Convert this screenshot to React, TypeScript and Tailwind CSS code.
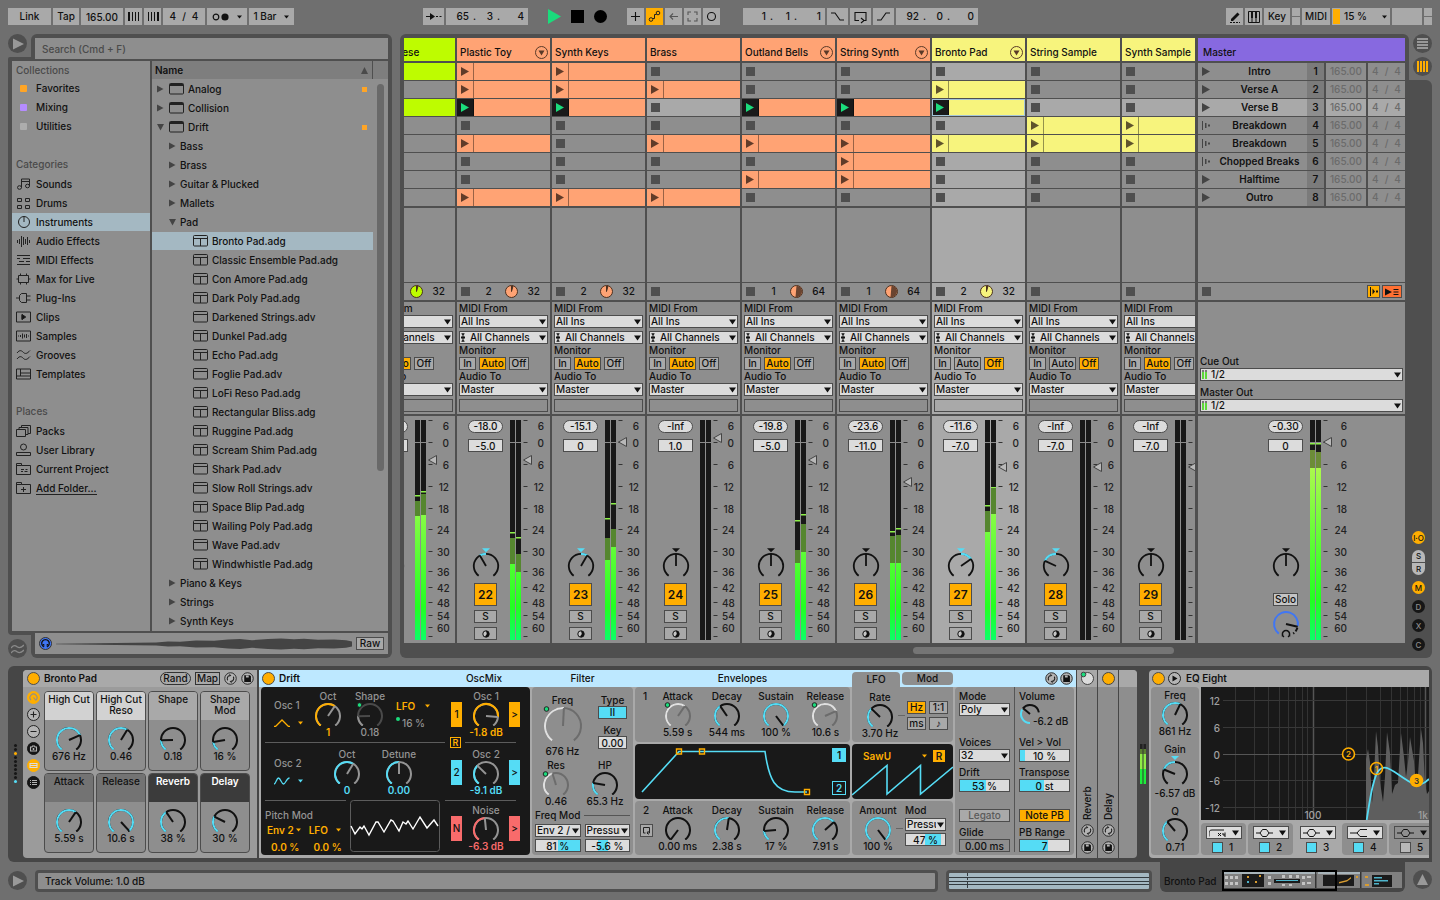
import { clsx } from "clsx";
import { type ReactNode } from "react";

const CYAN = "#55dcf5";
const AMBER = "#ffae00";
const ROSE = "#f86b6b";
const GREEN = "#1bdc7c";

/* ---------- small shared pieces ---------- */

function polar(cx: number, cy: number, r: number, deg: number) {
  const a = (deg * Math.PI) / 180;
  return `${(cx + r * Math.sin(a)).toFixed(2)} ${(cy - r * Math.cos(a)).toFixed(2)}`;
}

function arc(cx: number, cy: number, r: number, from: number, to: number) {
  return `M${polar(cx, cy, r, from)}A${r} ${r} 0 ${to - from > 180 ? 1 : 0} 1 ${polar(cx, cy, r, to)}`;
}

const SWEEP = 143;

type KnobColors = {
  on?: string;
  off?: string;
  needle?: string;
  // shows the green dot of a macro-mapped parameter
  mapped?: boolean;
};

function Knob({
  label,
  value,
  on = CYAN,
  off = "#111",
  needle = "#111",
  mapped,
  r = 12,
  className = "h-6 w-7",
}: KnobColors & {
  label: string;
  value: number;
  r?: number;
  className?: string;
}) {
  const c = r + 2;
  const angle = -SWEEP + value * SWEEP * 2;
  return (
    <svg
      role="slider"
      aria-label={label}
      aria-valuenow={Math.round(value * 100)}
      viewBox={`0 0 ${c * 2} ${c * 2 - 4}`}
      className={clsx("shrink-0", className)}
      fill="none"
      strokeWidth="2"
    >
      <path d={arc(c, c, r, -SWEEP, SWEEP)} stroke={off} />
      {value > 0 && <path d={arc(c, c, r, -SWEEP, angle)} stroke={on} />}
      <path d={`M${c} ${c}L${polar(c, c, r, angle)}`} stroke={needle} />
      {mapped && <circle cx="3.5" cy="3" r="2.3" fill={GREEN} stroke="#222" strokeWidth="1" />}
    </svg>
  );
}

function ParamKnob({
  label,
  value,
  text,
  textClass = "",
  labelClass = "",
  ...knob
}: KnobColors & {
  label: string;
  value: number;
  text: string;
  textClass?: string;
  labelClass?: string;
}) {
  return (
    <div className="flex w-7 shrink-0 flex-col items-center leading-3 whitespace-nowrap">
      <span className={labelClass}>{label}</span>
      <Knob label={label} value={value} {...knob} />
      <span className={textClass}>{text}</span>
    </div>
  );
}

function PanKnob({ angle }: { angle: number }) {
  return (
    <svg
      role="slider"
      aria-label="Pan"
      aria-valuenow={angle}
      viewBox="0 0 28 32"
      className="h-8 w-7 shrink-0"
      fill="none"
      strokeWidth="1.8"
    >
      <path d="M10 1.2h8l-4 4z" fill={angle ? CYAN : "#111"} />
      <path d={arc(14, 19, 12.2, -SWEEP, SWEEP)} stroke="#111" />
      {angle !== 0 && (
        <path
          d={arc(14, 19, 12.2, Math.min(0, angle), Math.max(0, angle))}
          stroke={CYAN}
          strokeWidth="2.2"
        />
      )}
      <path d={`M14 19L${polar(14, 19, 12.2, angle)}`} stroke="#111" />
    </svg>
  );
}

function Caret({ className = "" }: { className?: string }) {
  return (
    <svg viewBox="0 0 7 6" className={clsx("h-1.5 w-[7px] shrink-0", className)} fill="currentColor">
      <path d="M0 .5h7L3.5 5.5z" />
    </svg>
  );
}

function SmallCaret() {
  return (
    <svg viewBox="0 0 5 4" className="h-1 w-[5px] shrink-0" fill="currentColor">
      <path d="M0 .5h5L2.5 3.5z" />
    </svg>
  );
}

function Select({ label, value, icon }: { label: string; value: string; icon?: ReactNode }) {
  return (
    <div className="grid h-[13px] grid-cols-1 items-center">
      <select
        aria-label={label}
        className={clsx(
          "col-start-1 row-start-1 h-[13px] w-full appearance-none overflow-hidden border border-[#4c4c4c] bg-[#dcdcdc] text-[10px] leading-[11px] font-medium",
          icon ? "pl-2.5" : "pl-px",
        )}
      >
        <option>{value}</option>
      </select>
      {icon && (
        <span className="pointer-events-none col-start-1 row-start-1 ml-0.5">{icon}</span>
      )}
      <span className="pointer-events-none col-start-1 row-start-1 mr-px flex h-[11px] w-[9px] items-center justify-center justify-self-end bg-[#dcdcdc]">
        <Caret />
      </span>
    </div>
  );
}

// Number box with a value bar drawn behind the digits, from/to in percent
function ValueBox({
  label,
  value,
  from = 0,
  to = 0,
  className = "bg-[#dcdcdc]",
}: {
  label: string;
  value: string;
  from?: number;
  to?: number;
  className?: string;
}) {
  return (
    <input
      aria-label={label}
      defaultValue={value}
      className={clsx(
        "h-[13px] w-full min-w-0 border border-[#4c4c4c] text-center text-[10px] leading-[11px]",
        className,
      )}
      style={
        to > from
          ? {
              background: `linear-gradient(90deg,#dcdcdc ${from}%,${CYAN} ${from}% ${to}%,#dcdcdc ${to}%)`,
            }
          : undefined
      }
    />
  );
}

function Toggle({
  on,
  children,
  className = "",
}: {
  on?: boolean;
  children: ReactNode;
  className?: string;
}) {
  return (
    <button
      aria-pressed={!!on}
      className={clsx(
        "flex h-[13px] items-center justify-center border border-[#4c4c4c] leading-[11px]",
        on ? "bg-[#ffae00]" : "bg-[#a9a9a9]",
        className,
      )}
    >
      {children}
    </button>
  );
}

function PowerDot({ label }: { label: string }) {
  return (
    <button
      aria-label={label}
      className="size-[13px] shrink-0 rounded-full border border-[#4c4c4c] bg-[#ffae00]"
    />
  );
}

function SwapButton() {
  return (
    <button aria-label="Hot-swap" className="shrink-0">
      <svg viewBox="0 0 14 14" className="size-[13px]" fill="none" stroke="#222">
        <circle cx="7" cy="7" r="6.2" fill="#b4b4b4" />
        <path d="M4 9a3.6 3.6 0 0 1 2-5.3M10 5a3.6 3.6 0 0 1-2 5.3" strokeWidth="1.2" />
        <path d="M5.5 2.2 8 3.5 6 5.2zM8.500 11.800 6 10.500 8 8.800z" fill="#222" stroke="none" />
      </svg>
    </button>
  );
}

function SaveButton() {
  return (
    <button aria-label="Save preset" className="shrink-0">
      <svg viewBox="0 0 14 14" className="size-[13px]">
        <circle cx="7" cy="7" r="6.2" fill="#b4b4b4" stroke="#222" />
        <path d="M3.5 3.5h6l1.200 1.200v6H3.500z" fill="#111" />
        <path d="M5.300 3.800h3v2.200h-3z" fill="#b4b4b4" />
      </svg>
    </button>
  );
}

function PlayCircle({ label }: { label: string }) {
  return (
    <button aria-label={label} className="flex size-[19px] shrink-0 items-center justify-center rounded-full bg-[#4f4f4f]">
      <svg viewBox="0 0 11 12" className="ml-0.5 h-3 w-[11px]" fill="#999">
        <path d="M0 .5 11 6 0 11.500z" />
      </svg>
    </button>
  );
}

/* ---------- transport ---------- */

const box = "flex h-[17px] shrink-0 items-center bg-[#a9a9a9]";
const key = clsx(box, "justify-center");

function Line({ d, label, className = "w-[21px]" }: { d: string; label: string; className?: string }) {
  return (
    <button aria-label={label} className={clsx(key, className)}>
      <svg viewBox="0 0 17 17" className="size-[17px]" fill="none" stroke="currentColor" strokeWidth="1.1">
        <path d={d} />
      </svg>
    </button>
  );
}

function Position({ parts }: { parts: string[] }) {
  return (
    <div className={clsx(box, "w-[82px] justify-end pr-1")}>
      {parts.map((p, i) => (
        <span key={i} className="flex w-6 justify-end gap-1">
          <span>{p}</span>
          {i < 2 && <span>.</span>}
        </span>
      ))}
    </div>
  );
}

function Stepper() {
  return (
    <div className="flex w-2 shrink-0 flex-col gap-px">
      <span className="h-2 bg-[#a9a9a9]" />
      <span className="h-2 bg-[#a9a9a9]" />
    </div>
  );
}

function Transport() {
  return (
    <header className="flex h-[34px] shrink-0 items-start gap-0.5 px-2 pt-2">
      <button className={clsx(key, "w-[43px]")}>Link</button>
      <button className={clsx(key, "w-[26px]")}>Tap</button>
      <input aria-label="Tempo" defaultValue="165.00" className="h-[17px] w-[42px] bg-[#a9a9a9] text-center" />
      <button aria-label="Nudge down" className={clsx(key, "w-[17px]")}>
        <svg viewBox="0 0 12 9" className="h-[9px] w-3" stroke="#111">
          <path d="M1 0v9" strokeWidth="2" />
          <path d="M4.5 0v9M7.5 0v9M10.5 0v9" />
        </svg>
      </button>
      <button aria-label="Nudge up" className={clsx(key, "w-[17px]")}>
        <svg viewBox="0 0 12 9" className="h-[9px] w-3" stroke="#111">
          <path d="M1.5 0v9M4.5 0v9M7.5 0v9" />
          <path d="M11 0v9" strokeWidth="2" />
        </svg>
      </button>
      <button className={clsx(key, "w-[42px] gap-1.5")}>
        <span>4</span>
        <span>/</span>
        <span>4</span>
      </button>
      <button aria-label="Metronome" className={clsx(key, "w-10 gap-2")}>
        <svg viewBox="0 0 17 8" className="h-2 w-[17px]">
          <circle cx="4" cy="4" r="2.8" fill="none" stroke="#111" strokeWidth="1.2" />
          <circle cx="13" cy="4" r="3.6" fill="#111" />
        </svg>
        <SmallCaret />
      </button>
      <button className={clsx(key, "w-[45px] gap-2")}>
        1 Bar <SmallCaret />
      </button>

      <div className="w-[125px] shrink" />

      <button aria-label="Follow" className={clsx(key, "w-[21px]")}>
        <svg viewBox="0 0 17 9" className="h-[9px] w-[17px]" stroke="#111">
          <path d="M1 4.5h5" />
          <path d="M5 1v7l5-3.5z" fill="#111" stroke="none" />
          <path d="M11 4.5h2M14.5 4.5h2" />
        </svg>
      </button>
      <Position parts={["65", "3", "4"]} />
      <div className="flex h-[17px] items-center gap-2.5 px-[18px]">
        <button aria-label="Play">
          <svg viewBox="0 0 13 15" className="h-[15px] w-[13px]" fill={GREEN}>
            <path d="M0 0 13 7.5 0 15z" />
          </svg>
        </button>
        <button aria-label="Stop" className="size-[13px] bg-black" />
        <button aria-label="Record" className="size-[13px] rounded-full bg-black" />
      </div>
      <Line label="Overdub" className="w-[17px]" d="M8.5 4v9M4 8.5h9" />
      <button
        aria-label="Automation arm"
        className="flex h-[17px] w-[17px] shrink-0 items-center justify-center bg-[#ffae00]"
      >
        <svg viewBox="0 0 17 17" className="size-[17px]" fill="none" stroke="#222">
          <circle cx="5" cy="11.5" r="1.8" />
          <circle cx="12" cy="5" r="1.8" />
          <path d="M6.5 10.5h2V6.5h2" />
        </svg>
      </button>
      <Line label="Re-enable automation" className="w-[17px] text-[#555]" d="M13 8.5H5M8 5.5l-3 3 3 3" />
      <Line
        label="Capture MIDI"
        className="w-[17px] text-[#555]"
        d="M4 7V4h3M10 4h3v3M13 10v3h-3M7 13H4v-3"
      />
      <Line label="Session record" className="w-[17px]" d="M12.5 8.5a4 4 0 1 1-8 0 4 4 0 0 1 8 0z" />
      <div className="w-[19px] shrink-0" />
      <Position parts={["1", "1", "1"]} />
      <Line label="Punch in" d="M2 5h4l5 7h4" />
      <Line label="Loop" d="M7 12.5H3v-8h11v8h-3M9 10l3 2.500L9 15" />
      <Line label="Punch out" d="M2 12h4l5-7h4" />
      <Position parts={["92", "0", "0"]} />

      <div className="grow" />

      <button aria-label="Draw mode" className={clsx(key, "w-[17px]")}>
        <svg viewBox="0 0 12 12" className="size-3">
          <path d="M2 8 8.5 1.5l2 2L4 10H2z" fill="#111" />
          <path d="M1 11.5h10" stroke="#111" strokeDasharray="2 1" />
        </svg>
      </button>
      <button aria-label="MIDI keyboard" className={clsx(key, "w-[17px]")}>
        <svg viewBox="0 0 12 12" className="size-3" stroke="#111" fill="none">
          <path d="M.5 .5h11v11H.5zM4 6v5.5M8 6v5.5" />
          <path d="M4 1v6M8 1v6" strokeWidth="2" />
        </svg>
      </button>
      <button className={clsx(key, "w-[26px]")}>Key</button>
      <Stepper />
      <button className={clsx(key, "w-7")}>MIDI</button>
      <button className={clsx(box, "w-[58px] pr-[3px] pl-px")}>
        <span className="mr-1 h-[15px] w-[7px] bg-[#ffae00]" />
        <span className="grow text-left">15 %</span>
        <SmallCaret />
      </button>
      <div className={clsx(box, "w-[30px]")} />
      <Stepper />
    </header>
  );
}

/* ---------- browser ---------- */

const ic = {
  Sounds: "M5.5 10.5V2h8v7M5.5 4.5h8M5.5 10.5a2 1.8 0 1 1-4 0 2 1.8 0 0 1 4 0M13.5 9a2 1.8 0 1 1-4 0 2 1.8 0 0 1 4 0",
  Drums: "M1.5 2.5h4v3h-4zM9.5 2.5h4v3h-4zM1.5 9.5h4v3h-4zM9.5 9.5h4v3h-4z",
  Instruments: "M13.5 7a5.5 5.5 0 1 1-11 0 5.5 5.5 0 0 1 11 0M8 1.5V7",
  "Audio Effects": "M1.5 6v3M3.5 5v5M5.5 2v11M7.5 3v8M9.5 5v5M11.5 3v8M13.5 6v3",
  "MIDI Effects": "M1 2.5h13M1 5.5h3M7 5.5h7M3 8.5h5M10 8.5h4M1 11.5h13",
  "Max for Live": "M2.5 3.5h10v7h-10zM4.5 1.5v2M10.5 1.5v2M4.5 10.5v2M10.5 10.5v2M.5 7h2M12.5 7h2",
  "Plug-Ins": "M0 7h3M10.5 2.5H5.5L3.5 4.5v5l2 2h5zM10.5 5h4M10.5 9h4",
  Clips: "M.5 2h14v10H.5zM6 4.5v5L9.5 7z",
  Samples: "M.5 2h14v10H.5zM2.5 6.5v1M4.5 6v2M6.5 4.5v5M8.5 5.5v3M10.5 5v4M12.5 6.5v1",
  Grooves: "M1 5c3-4 5-2 6.5-.5S11 6 14 2.5M1 11c3-4 5-2 6.5-.5S11 12 14 8.5",
  Templates: "M.5 2h14v10H.5zM4.5 2v7M.5 9h14M4.5 6h10",
  Packs: "M.5 5.5h9v7h-9zM3 5.5v-2h9v7H9.5M5.5 3.5v-2h9v8h-2.5",
  "User Library": "M10.5 4a3 3 0 1 1-6 0 3 3 0 0 1 6 0M.5 9.5h14v3H.5z",
  "Current Project": "M.5 12.5v-11h5v2h9v9zM.5 3.5h5M5 7.5h3M9.5 7.5h2M5 9.5h2M8.5 9.5h3",
  "Add Folder...": "M.5 12.5v-11h5v2h9v9zM.5 3.5h5M7.5 6v5M5 8.5h5",
};

const categories: (keyof typeof ic)[] = [
  "Sounds",
  "Drums",
  "Instruments",
  "Audio Effects",
  "MIDI Effects",
  "Max for Live",
  "Plug-Ins",
  "Clips",
  "Samples",
  "Grooves",
  "Templates",
];
const places: (keyof typeof ic)[] = ["Packs", "User Library", "Current Project", "Add Folder..."];

const collections = [
  { name: "Favorites", color: "bg-[#ffa526]" },
  { name: "Mixing", color: "bg-[#b58cff]" },
  { name: "Utilities", color: "bg-[#adadad]" },
];

type Node = { name: string; level: number; open?: boolean; tag?: boolean };
const nodes: Node[] = [
  { name: "Analog", level: 0, tag: true },
  { name: "Collision", level: 0 },
  { name: "Drift", level: 0, open: true, tag: true },
  { name: "Bass", level: 1 },
  { name: "Brass", level: 1 },
  { name: "Guitar & Plucked", level: 1 },
  { name: "Mallets", level: 1 },
  { name: "Pad", level: 1, open: true },
  { name: "Bronto Pad.adg", level: 2 },
  { name: "Classic Ensemble Pad.adg", level: 2 },
  { name: "Con Amore Pad.adg", level: 2 },
  { name: "Dark Poly Pad.adg", level: 2 },
  { name: "Darkened Strings.adv", level: 2 },
  { name: "Dunkel Pad.adg", level: 2 },
  { name: "Echo Pad.adg", level: 2 },
  { name: "Foglie Pad.adv", level: 2 },
  { name: "LoFi Reso Pad.adg", level: 2 },
  { name: "Rectangular Bliss.adg", level: 2 },
  { name: "Ruggine Pad.adg", level: 2 },
  { name: "Scream Shim Pad.adg", level: 2 },
  { name: "Shark Pad.adv", level: 2 },
  { name: "Slow Roll Strings.adv", level: 2 },
  { name: "Space Blip Pad.adg", level: 2 },
  { name: "Wailing Poly Pad.adg", level: 2 },
  { name: "Wave Pad.adv", level: 2 },
  { name: "Windwhistle Pad.adg", level: 2 },
  { name: "Piano & Keys", level: 1 },
  { name: "Strings", level: 1 },
  { name: "Synth Keys", level: 1 },
];

function SideRow({ name, active }: { name: keyof typeof ic; active?: boolean }) {
  return (
    <li>
      <button
        className={clsx("mt-px flex h-[18px] w-full items-center gap-1 pl-1 text-left", active && "bg-[#a4b8c2]")}
      >
        <svg viewBox="0 0 16 14" className="h-3.5 w-4 shrink-0" fill="none" stroke="#222">
          <path d={ic[name]} />
          {name === "Clips" && <path d="M6 4.5v5L9.5 7z" fill="#111" />}
        </svg>
        <span className={clsx("leading-3", name === "Add Folder..." && "border-b border-[#222]")}>{name}</span>
      </button>
    </li>
  );
}

function TreeRow({ node }: { node: Node }) {
  const active = node.name === "Bronto Pad.adg";
  return (
    <li>
      <button
        className={clsx(
          "mt-px flex h-[18px] w-full items-center text-left",
          node.level === 0 && "pl-[5px]",
          node.level === 1 && "pl-[17px]",
          node.level === 2 && "pl-[41px]",
          active && "bg-[#a4b8c2]",
        )}
      >
        {node.level < 2 && (
          <svg viewBox="0 0 7 8" className="mr-1 h-2 w-[7px]" fill="#444">
            <path d={node.open ? "M0 1h7L3.5 7.5z" : "M0 .5 6.5 4 0 7.5z"} />
          </svg>
        )}
        {node.level !== 1 && (
          <svg
            viewBox="0 0 15 12"
            className={clsx("mr-1 h-3 w-[15px]", node.level === 0 && "ml-px")}
            fill="none"
            stroke="#222"
          >
            <rect x=".5" y=".5" width="14" height="10.5" rx="1" />
            {node.level === 0 ? (
              <path d="M1 2h13" strokeWidth="2" />
            ) : (
              <path d={node.name.endsWith("adg") ? "M1 3.5h13M7.5 3.5V11" : "M1 3.5h13"} />
            )}
          </svg>
        )}
        <span className="grow">{node.name}</span>
        {node.tag && <span className="mr-1.5 size-[5px] shrink-0 bg-[#ffa526]" />}
      </button>
    </li>
  );
}

function Browser() {
  return (
    <section className="flex w-96 shrink-0 flex-col">
      <div className="flex">
        <div className="flex w-[23px] flex-col justify-between">
          <PlayCircle label="Preview" />
          <div className="h-0.5 rounded-tl-sm bg-[#4f4f4f]" />
        </div>
        <div className="grow rounded-t-md bg-[#4f4f4f] px-1 pt-1">
          <input
            type="search"
            aria-label="Search"
            placeholder="Search (Cmd + F)"
            className="block h-[21px] w-full bg-[#8e8e8e] px-[7px] placeholder:text-[#4a4a4a]"
          />
        </div>
      </div>
      <div className="flex grow gap-0.5 bg-[#4f4f4f] px-1 pt-0.5">
        <nav className="w-[138px] bg-[#8e8e8e]">
          <h2 className="h-[18px] pl-1 leading-[18px] text-[#4a4a4a]">Collections</h2>
          <ul className="mb-[19px]">
            {collections.map((c) => (
              <li key={c.name}>
                <button className="flex h-[19px] items-center gap-[9px] pl-2">
                  <span className={clsx("size-[7px] rounded-[1px]", c.color)} />
                  {c.name}
                </button>
              </li>
            ))}
          </ul>
          <h2 className="h-[19px] pl-1 leading-[19px] text-[#4a4a4a]">Categories</h2>
          <ul className="mb-[19px]">
            {categories.map((c) => (
              <SideRow key={c} name={c} active={c === "Instruments"} />
            ))}
          </ul>
          <h2 className="h-[19px] pl-1 leading-[19px] text-[#4a4a4a]">Places</h2>
          <ul>
            {places.map((c) => (
              <SideRow key={c} name={c} />
            ))}
          </ul>
        </nav>
        <div className="grow bg-[#8e8e8e]">
          <div className="flex h-[18px] items-center bg-[#7e7e7e] pl-[3px]">
            <span className="grow font-semibold">Name</span>
            <svg viewBox="0 0 7 7" className="mr-1 size-[7px]" fill="#4a4a4a">
              <path d="M3.5 0 7 7H0z" />
            </svg>
            <span className="h-full w-4 border-l border-[#4f4f4f]" />
          </div>
          <div className="flex">
            <ul className="grow">
              {nodes.map((n) => (
                <TreeRow key={n.name} node={n} />
              ))}
            </ul>
            <div className="w-[15px] pt-[5px] pl-1">
              <div className="h-[387px] w-[7px] rounded-full bg-[#696969]" />
            </div>
          </div>
        </div>
      </div>
      <div className="flex">
        <div className="flex w-[23px] flex-col justify-between">
          <div className="h-1 rounded-bl-md bg-[#4f4f4f]" />
          <button aria-label="Groove pool" className="flex size-[19px] items-center justify-center rounded-full bg-[#4f4f4f]">
            <svg viewBox="0 0 13 10" className="h-2.5 w-[13px]" fill="none" stroke="#8a8a8a" strokeWidth="1.3">
              <path d="M0 4c3-4 5-2 6.5-1S10 4 13 1M0 9c3-4 5-2 6.5-1S10 9 13 6" />
            </svg>
          </button>
        </div>
        <div className="grow rounded-b-md bg-[#4f4f4f] px-1 pt-0.5 pb-1">
          <div className="flex h-[21px] items-center gap-1 bg-[#8e8e8e] px-1">
            <button aria-label="Headphone preview" className="shrink-0">
              <svg viewBox="0 0 13 13" className="size-[13px]">
                <circle cx="6.5" cy="6.5" r="6" fill="#3f76f5" stroke="#333" />
                <path d="M4.8 9.8A3.8 3.8 0 1 1 8.2 9.8" fill="none" stroke="#111" strokeWidth="1.3" />
                <path d="M3.5 7h1.800v3zM9.500 7H7.700v3z" fill="#111" />
              </svg>
            </button>
            <svg viewBox="0 0 296 12" preserveAspectRatio="none" className="h-3 min-w-0 grow" fill="#444">
              <path d="M0 5.7 60 5.1 100 4.400 112 3.600 124 3.800 140 2.400 158 2.800 172 1.600 184 1 196 2.200 212 1 225 .5 238 1.200 248 .8 262 1.800 278 1.400 290 2.200 296 3.500V8.500L290 9.800 278 10.600 262 10.200 248 11.200 238 10.800 225 11.500 212 11 196 9.800 184 11 172 10.400 158 9.200 140 9.600 124 8.200 112 8.400 100 7.600 60 6.900 0 6.300z" />
            </svg>
            <Toggle className="w-7">Raw</Toggle>
          </div>
        </div>
      </div>
    </section>
  );
}

/* ---------- session view ---------- */

type Track = {
  name: string;
  color: string;
  pie?: string;
  menu?: boolean;
  clips: number[];
  playing?: boolean;
  status?: [string, string];
  auto?: boolean;
  peak: string;
  volume: string;
  number: string;
  pan: number;
  fader: number;
  // peak line, dim top, bright top per channel, in meter pixels
  meter?: number[][];
};

const ORANGE = "bg-[#ffa374]";
const YELLOW = "bg-[#f7f47d]";

const tracks: Track[] = [
  { name: "Big Cheese", color: "bg-[#befc00]", pie: "#befc00", clips: [1, 3], playing: true, status: ["2", "32"], auto: true, peak: "-9.4", volume: "-5.0", number: "21", pan: 0, fader: 40, meter: [[75, 81, 96], [71, 74, 95]] },
  { name: "Plastic Toy", color: ORANGE, pie: "#ffa374", menu: true, clips: [1, 2, 3, 5, 8], playing: true, status: ["2", "32"], auto: true, peak: "-18.0", volume: "-5.0", number: "22", pan: -30, fader: 40, meter: [[112, 118, 144], [117, 134, 152]] },
  { name: "Synth Keys", color: ORANGE, pie: "#ffa374", clips: [1, 2, 3, 8], playing: true, status: ["2", "32"], auto: true, peak: "-15.1", volume: "0", number: "23", pan: 30, fader: 22, meter: [[98, 118, 140], [83, 109, 127]] },
  { name: "Brass", color: ORANGE, clips: [2, 5, 8], auto: true, peak: "-Inf", volume: "1.0", number: "24", pan: 0, fader: 18 },
  { name: "Outland Bells", color: ORANGE, pie: "#ffa374", menu: true, clips: [3, 5, 7], playing: true, status: ["1", "64"], auto: true, peak: "-19.8", volume: "-5.0", number: "25", pan: 0, fader: 40, meter: [[100, 130, 143], [94, 104, 132]] },
  { name: "String Synth", color: ORANGE, pie: "#ffa374", menu: true, clips: [3, 5, 6, 7], playing: true, status: ["1", "64"], auto: true, peak: "-23.6", volume: "-11.0", number: "26", pan: 0, fader: 62, meter: [[111, 116, 143], [108, 115, 143]] },
  { name: "Bronto Pad", color: YELLOW, pie: "#f7f47d", menu: true, clips: [2, 3, 5], playing: true, status: ["2", "32"], peak: "-11.6", volume: "-7.0", number: "27", pan: 55, fader: 47, meter: [[85, 91, 112], [67, 69, 94]] },
  { name: "String Sample", color: YELLOW, clips: [4, 5], peak: "-Inf", volume: "-7.0", number: "28", pan: -65, fader: 47 },
  { name: "Synth Sample", color: YELLOW, clips: [4, 5], auto: true, peak: "-Inf", volume: "-7.0", number: "29", pan: 0, fader: 47 },
];

const scenes = ["Intro", "Verse A", "Verse B", "Breakdown", "Breakdown", "Chopped Breaks", "Halftime", "Outro"];

function StopSquare() {
  return <button aria-label="Stop" className="ml-1 size-[9px] shrink-0 bg-[#4f4f4f]" />;
}

function ClipSlot({ track, row, selected }: { track: Track; row: number; selected: boolean }) {
  const filled = track.clips.includes(row);
  const playing = filled && row === 3 && track.playing;
  if (!filled) {
    return (
      <div className={clsx("flex h-[17px] items-center", selected || row === 3 ? "bg-[#a9a9a9]" : "bg-[#8e8e8e]")}>
        <StopSquare />
      </div>
    );
  }
  return (
    <div
      className={clsx(
        "flex h-[17px]",
        track.color,
        selected && row === 3 && "outline -outline-offset-1 outline-[#a4c4d8]",
      )}
    >
      <button
        aria-label="Launch clip"
        className={clsx("flex w-[17px] items-center border-r border-black/40 pl-1", playing && "bg-[#1a1a1a]")}
      >
        <svg viewBox="0 0 8 9" className="h-[9px] w-2" fill={playing ? GREEN : "rgba(30,15,10,.7)"}>
          <path d="M0 0 8 4.5 0 9z" />
        </svg>
      </button>
    </div>
  );
}

const scale = [
  ["6", "h-[17px]"],
  ["0", "h-[22px]"],
  ["6", "h-[22px]"],
  ["12", "h-[22px]"],
  ["18", "h-[21px]"],
  ["24", "h-[22px]"],
  ["30", "h-5"],
  ["36", "h-4"],
  ["42", "h-[15px]"],
  ["48", "h-[13px]"],
  ["54", "h-3"],
  ["60", "h-3"],
];
const ticks = [0.5, 22.5, 44.5, 66.5, 88.5, 109.5, 131.5, 151.5, 167.5, 182.5, 195.5, 207.5, 216.5];

function Meter({ id, levels, fader, hot }: { id: string; levels?: number[][]; fader: number; hot?: boolean }) {
  return (
    <svg viewBox="0 0 22 220" className="h-[220px] w-[22px] shrink-0">
      <defs>
        <linearGradient id={id} gradientUnits="userSpaceOnUse" x1="0" y1="220" x2="0" y2={hot ? 40 : 70}>
          <stop offset="0" stopColor="#0cff68" />
          <stop offset=".22" stopColor="#22ff22" />
          <stop offset="1" stopColor={hot ? "#b4f850" : "#a2fa50"} />
        </linearGradient>
      </defs>
      {[0, 1].map((ch) => {
        const x = ch * 6;
        const l = levels?.[ch];
        return (
          <g key={ch}>
            <rect x={x} width="5" height="220" fill="#181818" />
            <rect x={x} y="22" width="5" height="1" fill="#8a8a8a" />
            {l && (
              <>
                <rect x={x} y={l[1]} width="5" height={l[2] - l[1]} fill={hot ? "#6c8c38" : "#55862f"} />
                <rect x={x} y={l[2]} width="5" height={220 - l[2]} fill={`url(#${id})`} />
                <rect x={x} y={l[0]} width="5" height="1.5" fill="#8df04a" />
              </>
            )}
          </g>
        );
      })}
      {ticks.map((y) => (
        <path key={y} d={`M13.5 ${y}h4`} stroke="#333" />
      ))}
      <path d={`M13.5 ${fader}l8-4.5v9z`} fill="#b8b8b8" stroke="#444" />
    </svg>
  );
}

function Scale({ className = "" }: { className?: string }) {
  return (
    <div className={clsx("text-right leading-3 text-[#222]", className)}>
      {scale.map(([t, h], i) => (
        <div key={i} className={h}>
          {t}
        </div>
      ))}
    </div>
  );
}

function Levels({ peak, volume }: { peak: string; volume: string }) {
  return (
    <>
      <button className="mb-1.5 h-[13px] w-full rounded-full border border-[#4c4c4c] bg-[#dcdcdc] leading-[11px]">
        {peak}
      </button>
      <ValueBox label="Volume" value={volume} />
    </>
  );
}

const dots = (
  <svg viewBox="0 0 4 9" className="h-[9px] w-1" fill="#111">
    <path d="M0 .5h4L2 2.500zM0 3.500h4v2H0zM2 6.500l2 2H0zM1.500 0h1v9h-1z" />
  </svg>
);

const bars = (
  <svg viewBox="0 0 5 9" className="h-[9px] w-[5px]">
    <path d="M0 0h2v9H0zM3 0h2v9H3z" fill="#5ed83a" />
    <path d="M0 0h2v2H0zM3 0h2v2H3z" fill="#777" />
  </svg>
);

function TrackColumn({ track, selected = false }: { track: Track; selected?: boolean }) {
  const bg = selected ? "bg-[#a9a9a9]" : "bg-[#8e8e8e]";
  return (
    <div className="flex w-[93px] shrink-0 flex-col">
      <div className={clsx("mb-0.5 flex h-[23px] items-center justify-between pt-1.5 pr-0.5 pl-[3px] whitespace-nowrap", track.color)}>
        <span>{track.name}</span>
        {track.menu && (
          <svg viewBox="0 0 13 13" className="size-[13px]">
            <circle cx="6.5" cy="6.5" r="6" fill="none" stroke="#5a3a28" />
            <path d="M3.5 4.5h6l-3 5z" fill="#5a3a28" />
          </svg>
        )}
      </div>
      <div className="flex flex-col gap-px">
        {scenes.map((_, i) => (
          <ClipSlot key={i} track={track} row={i + 1} selected={selected} />
        ))}
      </div>
      <div className={clsx("mt-0.5 min-h-[74px] grow", bg)} />
      <div className={clsx("mt-px flex h-[17px] items-center", bg)}>
        <StopSquare />
        {track.status && (
          <>
            <span className="w-[35px] pl-0.5 text-center">{track.status[0]}</span>
            <svg viewBox="0 0 13 13" className="size-[13px] shrink-0">
              <circle cx="6.5" cy="6.5" r="6" fill={track.pie} stroke="#4a3020" />
              {track.status[1] === "64" ? (
                <path d="M6.5 .5a6 6 0 0 1-1 12z" fill="#6a4430" />
              ) : (
                <path d="M6.500 6.500V1h1.500z" fill="#4a3020" stroke="#4a3020" />
              )}
            </svg>
            <span className="grow pr-2.5 text-right">{track.status[1]}</span>
          </>
        )}
      </div>
      <div className={clsx("mt-0.5 flex h-28 flex-col px-0.5 leading-[13px]", bg)}>
        <span>MIDI From</span>
        <Select label="MIDI From" value="All Ins" />
        <div className="h-[3px]" />
        <Select label="MIDI channel" value="All Channels" icon={dots} />
        <span>Monitor</span>
        <div className="flex gap-[3px]" role="group" aria-label="Monitor">
          <Toggle className="w-[17px]">In</Toggle>
          <Toggle on={track.auto} className="w-[27px]">
            Auto
          </Toggle>
          <Toggle on={!track.auto} className="w-5">
            Off
          </Toggle>
        </div>
        <span>Audio To</span>
        <Select label="Audio To" value="Master" />
        <div className="mt-[3px] h-[13px] border border-[#4c4c4c]" />
      </div>
      <div className={clsx("mt-0.5 flex h-[227px] pt-1 pl-[11px]", bg)}>
        <div className="mr-[7px] flex w-[35px] flex-col items-center">
          <Levels peak={track.peak} volume={track.volume} />
          <div className="grow" />
          <PanKnob angle={track.pan} />
          <button className="mt-1 h-[23px] w-[23px] border border-[#4c4c4c] bg-[#ffae00] text-xs font-semibold">
            {track.number}
          </button>
          <Toggle className="mt-1 w-[23px]">S</Toggle>
          <button
            aria-label="Arm"
            className="mt-1 mb-[3px] flex h-[13px] w-[23px] items-center justify-center border border-[#4c4c4c] bg-[#a9a9a9]"
          >
            <svg viewBox="0 0 8 8" className="size-2">
              <circle cx="4" cy="4" r="3.2" fill="#c8c8c8" stroke="#111" />
              <path d="M4 .8A3.2 3.2 0 0 1 4 7.200L3 6.500 4.800 4z" fill="#111" />
            </svg>
          </button>
        </div>
        <Meter id={`m${track.number}`} levels={track.meter} fader={track.fader} />
        <Scale className="w-3" />
      </div>
    </div>
  );
}

function MasterColumn() {
  return (
    <div className="flex w-[207px] shrink-0 flex-col">
      <div className="mb-0.5 flex h-[23px] items-center bg-[#8769e0] px-[5px] pt-1.5">Master</div>
      <div className="flex flex-col gap-px">
        {scenes.map((name, i) => {
          const bg = i === 2 ? "bg-[#a9a9a9]" : "bg-[#8e8e8e]";
          const num = i === 2 ? "bg-[#8e8e8e]" : "bg-[#7b7b7b]";
          const follow = i > 2 && i < 6;
          return (
            <div key={i} className="flex h-[17px] gap-0.5">
              <div className={clsx("flex grow items-center", bg)}>
                <button aria-label="Launch scene" className="w-3.5 pl-1">
                  <svg viewBox="0 0 8 9" className="h-[9px] w-2" fill="#444">
                    {follow ? <path d="M0 0h1v9H0zM3 2h1.5v5H3zM6 3.5h2v2H6z" /> : <path d="M0 0 8 4.5 0 9z" />}
                  </svg>
                </button>
                <span className="grow text-center font-semibold whitespace-nowrap">{name}</span>
                <span className={clsx("h-full w-[17px] text-center leading-[17px] font-semibold", num)}>{i + 1}</span>
              </div>
              <span className={clsx("w-10 text-center leading-[17px] text-[#6b6b6b]", bg)}>165.00</span>
              <span className={clsx("flex w-[37px] justify-center gap-1.5 leading-[17px] text-[#6b6b6b]", bg)}>
                <span>4</span>
                <span>/</span>
                <span>4</span>
              </span>
            </div>
          );
        })}
      </div>
      <div className="mt-0.5 min-h-[74px] grow bg-[#8e8e8e]" />
      <div className="mt-px flex h-[17px] items-center bg-[#8e8e8e] pr-[3px]">
        <StopSquare />
        <div className="grow" />
        <Toggle on className="mr-0.5 w-[13px]">
          <svg viewBox="0 0 8 9" className="h-[9px] w-2" fill="#111">
            <path d="M0 0h1v9H0zM2.5 1.5 5 4.500 2.500 7.500zM6 3.500h2v2H6z" />
          </svg>
        </Toggle>
        <button
          aria-label="Back to arrangement"
          className="flex h-[13px] w-5 items-center justify-center border border-[#4c4c4c] bg-[#ff7033]"
        >
          <svg viewBox="0 0 14 8" className="h-2 w-3.5" fill="#111">
            <path d="M0 .5 7 4 0 7.5zM8.5 1h5v1h-5zM8.5 3.5h5v1h-5zM8.5 6h5v1h-5z" />
          </svg>
        </button>
      </div>
      <div className="mt-0.5 flex h-28 flex-col justify-end bg-[#8e8e8e] px-0.5 pb-0.5 leading-[13px]">
        <span>Cue Out</span>
        <Select label="Cue Out" value="1/2" icon={bars} />
        <div className="h-[5px]" />
        <span>Master Out</span>
        <Select label="Master Out" value="1/2" icon={bars} />
      </div>
      <div className="mt-0.5 flex h-[227px] bg-[#8e8e8e] pt-1 pl-[70px]">
        <div className="mr-[7px] flex w-[35px] flex-col items-center">
          <Levels peak="-0.30" volume="0" />
          <div className="grow" />
          <PanKnob angle={0} />
          <button className="mt-3.5 mb-1 h-[13px] w-[25px] shrink-0 border border-[#4c4c4c] bg-[#c4c4c4] leading-[11px]">
            Solo
          </button>
          <svg
            role="slider"
            aria-label="Cue volume"
            aria-valuenow={90}
            viewBox="0 0 28 28"
            className="mb-[5px] size-7 shrink-0"
            fill="none"
            strokeWidth="2"
          >
            <path d={arc(14, 14, 12, -SWEEP, 100)} stroke="#3f76f5" />
            <path d={arc(14, 14, 12, 108, SWEEP)} stroke="#111" strokeDasharray="4 2" />
            <path d={`M14 14L${polar(14, 14, 12, 103)}`} stroke="#111" />
            <path d="M12 27a3.600 3.600 0 1 1 4 0M10.500 24v2.500M17.500 24v2.500" stroke="#111" strokeWidth="1.5" />
          </svg>
        </div>
        <Meter id="mm" levels={[[23, 30, 48], [23, 32, 48]]} fader={22} hot />
        <Scale className="w-[15px]" />
      </div>
    </div>
  );
}

function RailDot({ children, className }: { children: string; className: string }) {
  return (
    <button className={clsx("flex w-[13px] items-center justify-center text-[8px] leading-none", className)}>
      {children}
    </button>
  );
}

function Session() {
  return (
    <section className="flex min-w-0 grow">
      <div className="flex min-w-0 grow flex-col rounded-t-md rounded-bl-md bg-[#4f4f4f] px-1 pt-1">
        <div className="flex grow gap-[3px]">
          <div className="flex w-0 grow gap-0.5 overflow-hidden">
            {tracks.map((t, i) =>
              i === 0 ? (
                <div key={t.name} className="flex w-[51px] shrink-0 justify-end overflow-hidden">
                  <TrackColumn track={t} />
                </div>
              ) : (
                <TrackColumn key={t.name} track={t} selected={t.number === "27"} />
              ),
            )}
          </div>
          <MasterColumn />
        </div>
        <div className="flex h-[15px] items-center justify-end">
          <div className="mr-[231px] h-[7px] w-[261px] rounded-full bg-[#757575]" />
        </div>
      </div>
      <div className="flex w-[23px] shrink-0 flex-col">
        <div className="flex h-[46px] flex-col gap-1 pl-1">
          <button aria-label="Arrangement view" className="flex size-[19px] items-center justify-center rounded-full bg-[#4f4f4f]">
            <svg viewBox="0 0 11 11" className="size-[11px]" fill="#999">
              <path d="M0 0h11v2H0zM0 3h11v2H0zM0 6h11v2H0zM0 9h11v2H0z" />
            </svg>
          </button>
          <button aria-label="Session view" className="flex size-[19px] items-center justify-center rounded-full bg-[#4f4f4f]">
            <svg viewBox="0 0 11 11" className="size-[11px]" fill="#ffae00">
              <path d="M0 0h2v11H0zM3 0h2v11H3zM6 0h2v11H6zM9 0h2v11H9z" />
            </svg>
          </button>
        </div>
        <div className="flex grow flex-col justify-end gap-1.5 rounded-r-md bg-[#4f4f4f] pb-[7px] pl-[3px]">
          <RailDot className="h-[13px] rounded-full bg-[#ffae00]">I·O</RailDot>
          <div className="flex flex-col gap-px">
            <RailDot className="h-3 rounded-t-full bg-[#b8b8b8]">S</RailDot>
            <RailDot className="h-3 rounded-b-full bg-[#b8b8b8]">R</RailDot>
          </div>
          <RailDot className="h-[13px] rounded-full bg-[#ffae00]">M</RailDot>
          <RailDot className="h-[13px] rounded-full bg-[#161616] text-[#8e8e8e]">D</RailDot>
          <RailDot className="h-[13px] rounded-full bg-[#161616] text-[#8e8e8e]">X</RailDot>
          <RailDot className="h-[13px] rounded-full bg-[#161616] text-[#8e8e8e]">C</RailDot>
        </div>
      </div>
    </section>
  );
}

/* ---------- devices ---------- */

const macros = [
  { name: "High Cut", text: "676 Hz", value: 0.73, head: "bg-[#d2d2d2]" },
  { name: "High Cut Reso", text: "0.46", value: 0.61, head: "bg-[#d2d2d2]" },
  { name: "Shape", text: "0.18", value: 0.18, head: "bg-[#a9a9a9]" },
  { name: "Shape Mod", text: "16 %", value: 0.15, head: "bg-[#a9a9a9]" },
  { name: "Attack", text: "5.59 s", value: 0.62, head: "bg-[#737373]" },
  { name: "Release", text: "10.6 s", value: 0.98, head: "bg-[#737373]" },
  { name: "Reverb", text: "38 %", value: 0.38, head: "bg-[#3b3b3b] text-white font-semibold" },
  { name: "Delay", text: "30 %", value: 0.28, head: "bg-[#3b3b3b] text-white font-semibold" },
];

const rackIcons = [
  { label: "Macro controls", bg: AMBER, fg: "#8e8e8e", d: "M4 9a3.5 3.5 0 1 1 5 0M6.5 6.5l2.5 3" },
  { label: "Add macro", bg: "#b4b4b4", fg: "#222", d: "M6.5 3.5v6M3.5 6.5h6" },
  { label: "Remove macro", bg: "#b4b4b4", fg: "#222", d: "M3.5 6.5h6" },
  { label: "Variations", bg: "#161616", fg: "#b4b4b4", d: "M3.5 5H5l.5-1h2L8 5h1.5v4h-6zM6.5 6v2M5.5 7h2" },
  { label: "Devices", bg: AMBER, fg: "#ddd", d: "M3 4.5h7v4H3zM3 6.5h7" },
  { label: "Chain list", bg: "#161616", fg: "#b4b4b4", d: "M3 4.5h1M5 4.5h5M3 6.5h1M5 6.5h5M3 8.5h1M5 8.5h5" },
];

function Rack() {
  return (
    <article className="flex w-[234px] shrink-0 flex-col rounded-l bg-[#9b9b9b]">
      <header className="flex h-[17px] items-center gap-1 rounded-tl bg-[#a9a9a9] pr-[3px] pl-1">
        <PowerDot label="Rack on" />
        <h3 className="grow font-semibold">Bronto Pad</h3>
        <button className="h-[13px] w-[31px] rounded-full border border-[#333] leading-[11px]">Rand</button>
        <button className="h-[13px] w-[25px] border border-[#333] leading-[11px]">Map</button>
        <SwapButton />
        <SaveButton />
      </header>
      <div className="flex gap-1 pt-1 pl-1">
        <div className="flex flex-col gap-1">
          {rackIcons.map((r) => (
            <button key={r.label} aria-label={r.label}>
              <svg viewBox="0 0 13 13" className="size-[13px]" fill="none">
                <circle cx="6.5" cy="6.5" r="6" fill={r.bg} stroke={r.bg === "#b4b4b4" ? "#222" : r.bg} />
                <path d={r.d} stroke={r.fg} strokeWidth="1.1" />
              </svg>
            </button>
          ))}
        </div>
        <div className="grid grid-cols-4 gap-0.5">
          {macros.map((m) => (
            <div key={m.name} className="flex h-20 w-[50px] flex-col items-center overflow-hidden rounded border border-[#4c4c4c] bg-[#8e8e8e]">
              <div className={clsx("h-7 w-full pt-0.5 text-center leading-[11px]", m.head)}>{m.name}</div>
              <Knob label={m.name} value={m.value} className="mt-1.5 h-6 w-7" />
              <span className="leading-3">{m.text}</span>
            </div>
          ))}
        </div>
      </div>
    </article>
  );
}

const dark = "#949494";

function OscMix({ id, label, text, value, color, block, textClass }: {
  id: string;
  label: string;
  text: string;
  value: number;
  color: string;
  block: string;
  textClass: string;
}) {
  return (
    <div className="flex h-12 pl-1.5 text-[#111]">
      <button className={clsx("mt-3 h-[25px] w-[11px]", block)}>{id}</button>
      <div className="mr-[9px] ml-2.5">
        <ParamKnob
          label={label}
          value={value}
          text={text}
          on={color}
          off={dark}
          needle={dark}
          labelClass="text-[#949494]"
          textClass={textClass}
        />
      </div>
      <button className={clsx("mt-3 h-[25px] w-[11px]", block)}>&gt;</button>
    </div>
  );
}

function Oscillators() {
  return (
    <div className="flex w-[269px] shrink-0 rounded bg-[#191919] text-[#949494]">
      <div className="flex w-[184px] flex-col">
        <div className="flex h-[50px] pt-[3px] pl-[13px] leading-3">
          <div className="flex w-10 flex-col gap-2 pt-[9px]">
            <span>Osc 1</span>
            <button aria-label="Osc 1 shape" className="flex items-center gap-2 text-[#ffae00]">
              <svg viewBox="0 0 16 8" className="h-2 w-4" fill="none" stroke="currentColor" strokeWidth="1.3">
                <path d="M0 7.5h1.5L8 1l6.5 6.5H16" />
              </svg>
              <SmallCaret />
            </button>
          </div>
          <ParamKnob label="Oct" value={0.62} text="1" on={AMBER} off={dark} needle={dark} textClass="font-semibold text-[#ffae00]" />
          <div className="mr-3 ml-3.5">
            <ParamKnob label="Shape" value={0.18} text="0.18" on={dark} off="#4a4a4a" needle="#4a4a4a" mapped />
          </div>
          <div className="flex flex-col gap-[5px] pt-2.5">
            <button className="flex items-center gap-2.5 font-semibold text-[#ffae00]">
              LFO <SmallCaret />
            </button>
            <span className="flex gap-0.5 whitespace-nowrap">
              <i className="size-1 rounded-full bg-[#1bdc7c]" />
              16 %
            </span>
          </div>
        </div>
        <div className="flex h-[11px] items-center pl-1">
          <div className="h-px grow bg-[#5c5c5c]" />
        </div>
        <div className="flex h-12 pl-[13px] leading-3">
          <div className="flex w-[59px] flex-col gap-2 pt-[9px]">
            <span>Osc 2</span>
            <button aria-label="Osc 2 shape" className="flex items-center gap-2 text-[#55dcf5]">
              <svg viewBox="0 0 16 8" className="h-2 w-4" fill="none" stroke="currentColor" strokeWidth="1.3">
                <path d="M0 7C2 7 2.5 1 4.5 1S7.5 7 9.5 7 12.5 1 15.5 1" />
              </svg>
              <SmallCaret />
            </button>
          </div>
          <ParamKnob label="Oct" value={0.61} text="0" off={dark} needle={dark} textClass="font-semibold text-[#55dcf5]" />
          <div className="ml-6">
            <ParamKnob label="Detune" value={0.5} text="0.00" off={dark} needle={dark} textClass="font-semibold text-[#55dcf5]" />
          </div>
        </div>
        <div className="flex pt-1 pl-1 leading-3">
          <div className="mr-1 flex w-[81px] flex-col border-t border-[#5c5c5c] pt-2">
            <span>Pitch Mod</span>
            <div className="mt-[3px] flex gap-2 pl-0.5 font-semibold text-[#ffae00]">
              <button className="flex items-center gap-0.5">
                Env 2 <SmallCaret />
              </button>
              <button className="flex items-center gap-2">
                LFO <SmallCaret />
              </button>
            </div>
            <div className="mt-[5px] flex gap-3.5 pl-1.5 font-semibold whitespace-nowrap text-[#ffae00]">
              <span>0.0 %</span>
              <span>0.0 %</span>
            </div>
          </div>
          <svg viewBox="0 0 90 52" className="h-[52px] w-[90px]" fill="none">
            <rect x=".5" y=".5" width="89" height="51" rx="3" stroke="#5c5c5c" />
            <path
              d="M1 26 5 34 10 27 12 29 14 26 19 35 26 22 28 22 34 32 41 20 43 21 49 31 53 22 56 24 58 21 63 29 70 17 77 28 84 20 88 26"
              stroke="#fff"
              strokeWidth="1.4"
            />
          </svg>
        </div>
      </div>
      <div className="flex flex-col pt-[3px]">
        <OscMix id="1" label="Osc 1" text="-1.8 dB" value={0.83} color={AMBER} block="bg-[#ffae00]" textClass="font-semibold text-[#ffae00]" />
        <div className="-mt-px flex h-[11px] items-center pr-1 pl-[5px]">
          <button className="h-[11px] w-[11px] border border-[#ffae00] text-[9px] leading-[9px] font-semibold text-[#ffae00]">R</button>
          <div className="ml-1 h-px grow bg-[#5c5c5c]" />
        </div>
        <OscMix id="2" label="Osc 2" text="-9.1 dB" value={0.34} color={CYAN} block="bg-[#55dcf5]" textClass="font-semibold text-[#55dcf5]" />
        <div className="flex h-2 items-center pr-1">
          <div className="h-px grow bg-[#5c5c5c]" />
        </div>
        <OscMix id="N" label="Noise" text="-6.3 dB" value={0.48} color={ROSE} block="bg-[#f86b6b]" textClass="font-semibold text-[#f86b6b]" />
      </div>
    </div>
  );
}

function Filter() {
  return (
    <div className="flex w-[101px] shrink-0 flex-col rounded bg-[#8e8e8e] px-[3px] leading-3">
      <div className="flex h-[72px] gap-2 pt-[7px]">
        <div className="flex w-[55px] flex-col items-center">
          <span>Freq</span>
          <Knob label="Freq" value={0.51} r={18} on="#e0e0e0" off="#6c6c6c" needle="#6c6c6c" mapped className="h-9 w-10" />
          <span className="pt-[3px]">676 Hz</span>
        </div>
        <div className="flex w-[29px] flex-col items-center">
          <span>Type</span>
          <button aria-label="Filter type" className="mb-[5px] h-[13px] w-full border border-[#4c4c4c] bg-[#55dcf5] leading-[11px]">
            II
          </button>
          <span>Key</span>
          <ValueBox label="Key" value="0.00" />
        </div>
      </div>
      <div className="flex h-[50px] justify-between pr-[11px] pl-[7px]">
        <ParamKnob label="Res" value={0.44} text="0.46" on="#e0e0e0" off="#6c6c6c" needle="#6c6c6c" mapped />
        <ParamKnob label="HP" value={0.22} text="65.3 Hz" />
      </div>
      <div className="flex items-center gap-1 pb-[3px]">
        <span>Freq Mod</span>
        <span className="h-px grow bg-[#555]" />
      </div>
      <div className="grid grid-cols-2 gap-x-1 gap-y-0.5">
        <Select label="Freq mod source 1" value="Env 2 / Cyc" />
        <Select label="Freq mod source 2" value="Pressure" />
        <ValueBox label="Freq mod amount 1" value="81 %" from={50} to={100} />
        <ValueBox label="Freq mod amount 2" value="-5.6 %" from={28} to={50} />
      </div>
    </div>
  );
}

function Envelopes() {
  return (
    <div className="flex w-[215px] shrink-0 flex-col gap-0.5">
      <div className="flex h-[55px] rounded bg-[#8e8e8e] pt-[3px] pl-1 leading-3">
        <span className="w-3.5 pl-1">1</span>
        <div className="grid grow grid-cols-4 justify-items-center">
          <ParamKnob label="Attack" value={0.62} text="5.59 s" on="#e0e0e0" off="#6c6c6c" needle="#6c6c6c" mapped />
          <ParamKnob label="Decay" value={0.38} text="544 ms" />
          <ParamKnob label="Sustain" value={1} text="100 %" />
          <ParamKnob label="Release" value={0.73} text="10.6 s" on="#e0e0e0" off="#6c6c6c" needle="#6c6c6c" mapped />
        </div>
      </div>
      <div className="flex h-[55px] rounded bg-[#191919] font-semibold">
        <svg viewBox="0 0 197 55" className="h-[55px] w-[197px]" fill="none" strokeWidth="1.6">
          <path d="M7 48 44 7.5H130C134 36 140 48 160 48H172" stroke={CYAN} />
          <path d="M41.5 5h5v5h-5zM64.5 5h5v5h-5zM169.5 45.5h5v5h-5z" stroke={AMBER} strokeWidth="1.4" />
        </svg>
        <div className="flex flex-col justify-between py-1">
          <button className="size-[14px] bg-[#55dcf5] leading-3">1</button>
          <button className="size-[14px] border border-[#55dcf5] leading-3 text-[#55dcf5]">2</button>
        </div>
      </div>
      <div className="flex grow rounded bg-[#8e8e8e] pt-[3px] pl-1 leading-3">
        <div className="flex w-3.5 flex-col items-center gap-2">
          <span>2</span>
          <Toggle className="w-[13px]">
            <svg viewBox="0 0 9 9" className="size-[9px]" fill="none" stroke="#222">
              <path d="M3.5 7H1.5V1.5h6V7H5.5M6.5 5 5 7l1.5 1.5" />
            </svg>
          </Toggle>
        </div>
        <div className="grid grow grid-cols-4 justify-items-center">
          <ParamKnob label="Attack" value={0} text="0.00 ms" />
          <ParamKnob label="Decay" value={0.53} text="2.38 s" />
          <ParamKnob label="Sustain" value={0.17} text="17 %" />
          <ParamKnob label="Release" value={0.67} text="7.91 s" />
        </div>
      </div>
    </div>
  );
}

function Lfo() {
  return (
    <div className="flex w-[101px] shrink-0 flex-col gap-0.5">
      <div className="flex h-[55px] rounded-b bg-[#8e8e8e] pt-1 pl-3.5 leading-3">
        <ParamKnob label="Rate" value={0.34} text="3.70 Hz" />
        <div className="mt-6 mr-0.5 ml-1 h-px w-[7px] bg-[#666]" />
        <div className="grid grid-cols-2 content-start gap-[3px] pt-2.5">
          <Toggle on className="w-[19px]">Hz</Toggle>
          <Toggle className="w-[19px]">1:1</Toggle>
          <Toggle className="w-[19px]">ms</Toggle>
          <Toggle className="w-[19px]">♪</Toggle>
        </div>
      </div>
      <div className="h-[55px] rounded bg-[#191919]">
        <div className="flex h-[18px] items-end gap-1 pr-2 pl-[11px] leading-3 font-semibold text-[#ffae00]">
          <span className="grow">SawU</span>
          <button aria-label="LFO shape" className="pr-0.5 pb-1">
            <SmallCaret />
          </button>
          <button className="size-3 bg-[#ffae00] text-[#191919]">R</button>
        </div>
        <svg viewBox="0 0 101 37" className="h-[37px] w-[101px]" fill="none" stroke={CYAN} strokeWidth="1.6">
          <path d="M0 33 35 3.5V32L68.5 3.5V32L101 5" />
        </svg>
      </div>
      <div className="flex grow rounded bg-[#8e8e8e] pt-[3px] pl-3 leading-3">
        <ParamKnob label="Amount" value={1} text="100 %" />
        <div className="mt-6 mr-0.5 ml-1 h-px w-[7px] bg-[#666]" />
        <div className="flex w-[41px] flex-col gap-0.5">
          <span>Mod</span>
          <Select label="LFO mod source" value="Pressure" />
          <ValueBox label="LFO mod amount" value="47 %" from={50} to={90} />
        </div>
      </div>
    </div>
  );
}

function Global() {
  return (
    <div className="flex w-[119px] shrink-0 gap-1 rounded bg-[#8e8e8e] px-1 pb-[3px] leading-[13px]">
      <div className="flex w-[51px] flex-col pt-[3px]">
        <span>Mode</span>
        <Select label="Mode" value="Poly" />
        <span className="mt-5">Voices</span>
        <Select label="Voices" value="32" />
        <span className="mt-1">Drift</span>
        <ValueBox label="Drift" value="53 %" to={53} />
        <div className="grow" />
        <Toggle className="text-[#5a5a5a]">Legato</Toggle>
        <span className="mt-1">Glide</span>
        <ValueBox label="Glide" value="0.00 ms" className="bg-transparent" />
      </div>
      <div className="w-px bg-[#555]" />
      <div className="flex w-[51px] flex-col pt-[3px]">
        <span>Volume</span>
        <div className="flex h-[33px]">
          <svg
            role="slider"
            aria-label="Volume"
            aria-valuenow={34}
            viewBox="0 0 22 22"
            className="h-[22px] w-[22px] shrink-0"
            fill="none"
            strokeWidth="2"
          >
            <path d={arc(11, 11, 9, -180, -60)} stroke={CYAN} />
            <path d={arc(11, 11, 9, -52, 80)} stroke="#111" />
            <path d={`M11 11L${polar(11, 11, 9, -50)}`} stroke="#111" />
          </svg>
          <span className="-ml-2 pt-3 whitespace-nowrap">-6.2 dB</span>
        </div>
        <span className="whitespace-nowrap">Vel &gt; Vol</span>
        <ValueBox label="Velocity to volume" value="10 %" to={10} />
        <span className="mt-1">Transpose</span>
        <ValueBox label="Transpose" value="0 st" to={50} />
        <div className="grow" />
        <Toggle on>Note PB</Toggle>
        <span className="mt-1 whitespace-nowrap">PB Range</span>
        <ValueBox label="Pitch bend range" value="7" to={58} />
      </div>
    </div>
  );
}

function Drift() {
  return (
    <article className="flex shrink-0 flex-col bg-[#a9a9a9]">
      <header className="flex h-[17px] gap-0.5 bg-[#bde8ff] px-0.5 leading-[17px]">
        <div className="flex w-[269px] items-center gap-1 pl-px">
          <PowerDot label="Drift on" />
          <h3 className="grow font-semibold">Drift</h3>
          <span className="pr-7">OscMix</span>
        </div>
        <span className="w-[101px] text-center">Filter</span>
        <span className="w-[215px] text-center">Envelopes</span>
        <div className="flex w-[101px] items-end gap-0.5 leading-[14px]" role="tablist">
          <button role="tab" aria-selected className="h-[15px] w-12 rounded-t bg-[#8e8e8e] pb-1">LFO</button>
          <button role="tab" aria-selected={false} className="mb-0.5 h-[13px] w-[51px] rounded-sm bg-[#8e8e8e] leading-[13px]">Mod</button>
        </div>
        <div className="flex w-[119px] items-center justify-end gap-0.5 pr-px">
          <SwapButton />
          <SaveButton />
        </div>
      </header>
      <div className="flex h-[168px] gap-0.5 px-0.5">
        <Oscillators />
        <Filter />
        <Envelopes />
        <Lfo />
        <Global />
      </div>
    </article>
  );
}

function FoldedDevice({ name, on }: { name: string; on?: boolean }) {
  return (
    <article className="flex w-5 shrink-0 flex-col items-center gap-1 bg-[#8e8e8e] pb-1">
      <header className="flex h-[17px] w-full items-center justify-center bg-[#a9a9a9]">
        <button aria-label={`${name} on`}>
          <svg viewBox="0 0 17 15" className="h-[15px] w-[17px]" stroke="#444">
            <circle cx="8.5" cy="7.5" r="6" fill={on ? AMBER : "#dcdcdc"} />
            {!on && <circle cx="4.5" cy="3.5" r="2.3" fill={GREEN} />}
          </svg>
        </button>
      </header>
      <h3 className="grow rotate-180 leading-[14px] [writing-mode:vertical-rl]">{name}</h3>
      <SwapButton />
      <SaveButton />
    </article>
  );
}

const hexagon = "M0 5h4l2.5-3.5h4L13 5h4M4 5l2.5 3.5h4L13 5";
const bands = [
  { n: "1", d: "M0 8.5V5C0 3 1 2 3 2h12M9 5l3 3M12 5 9 8M14 5v2h2M16 4.5V9", on: true },
  { n: "2", d: hexagon, on: true },
  { n: "3", d: hexagon, on: true, selected: true },
  { n: "4", d: "M0 5h7l3-3.5h7M7 5l3 3.5h7", on: true },
  { n: "5", d: hexagon, on: false },
];

const vLines = [34, 53, 67, 78, 87, 94, 101, 106, 145, 165, 179, 190, 199, 206, 213, 219];
const hLines = [
  ["12", 14],
  ["6", 41],
  ["0", 68],
  ["-6", 94],
  ["-12", 121],
] as const;

function EqEight() {
  return (
    <article className="flex w-0 grow flex-col overflow-hidden rounded-l bg-[#a9a9a9]">
      <header className="flex h-[17px] shrink-0 items-center gap-[3px] pl-[3px]">
        <PowerDot label="EQ on" />
        <button aria-label="Show display" className="mr-0.5">
          <svg viewBox="0 0 13 13" className="size-[13px]">
            <circle cx="6.5" cy="6.5" r="6" fill="#b4b4b4" stroke="#222" />
            <path d="M4.5 3.5v6l5-3z" fill="#111" />
          </svg>
        </button>
        <h3 className="font-semibold whitespace-nowrap">EQ Eight</h3>
      </header>
      <div className="flex h-[168px] gap-0.5 pl-0.5">
        <div className="flex w-12 shrink-0 flex-col items-center rounded bg-[#8e8e8e] pt-0.5">
          <ParamKnob label="Freq" value={0.59} text="861 Hz" />
          <span className="mt-1.5 leading-3">Gain</span>
          <svg
            role="slider"
            aria-label="Gain"
            aria-valuenow={-6.57}
            viewBox="0 0 28 32"
            className="h-8 w-7"
            fill="none"
            strokeWidth="2"
          >
            <path d="M10 1h8l-4 4z" fill={CYAN} />
            <path d={arc(14, 19, 12, -SWEEP, SWEEP)} stroke="#111" />
            <path d={arc(14, 19, 12, -68, 0)} stroke={CYAN} />
            <path d={`M14 19L${polar(14, 19, 12, -68)}`} stroke="#111" />
          </svg>
          <span className="mb-1.5 leading-3 whitespace-nowrap">-6.57 dB</span>
          <ParamKnob label="Q" value={0.36} text="0.71" />
        </div>
        <div className="flex min-w-0 grow flex-col gap-[3px]">
          <svg viewBox="0 0 228 133" preserveAspectRatio="xMinYMin slice" className="h-[133px] w-full bg-[#191919] text-[10px] font-medium">
            {vLines.map((x) => (
              <path key={x} d={`M${x}.5 0v133`} stroke="#333" />
            ))}
            <path d="M112.5 0v133M224.5 0v133" stroke="#555" strokeWidth="1.5" />
            {hLines.map(([t, y]) => (
              <g key={t}>
                <path d={`M22 ${y - 0.5}h206`} stroke={t === "0" ? "#555" : "#383838"} />
                <text x="19" y={y + 3.5} textAnchor="end" fill="#a0a0a0">
                  {t}
                </text>
              </g>
            ))}
            <path
              d="M165 133V72L167 62 169 75 171 116 173 90 175 44 177 60 179 95 182 115 184 90 186 45 189 66 191 107 194 98 197 96 200 46 203 70 205 90 207 75 209 50 213 74 215 100 217 88 220 42 222 56 224 96 226 107 228 104V133z"
              fill="#5e5e5e"
            />
            <path
              d="M165.7 133C168 118 169.500 108 171.700 99.500S176 80.500 184 80.700C190 81 200 90 209 95S223 97 228 92"
              fill="none"
              stroke={CYAN}
              strokeWidth="1.8"
            />
            <circle cx="147.5" cy="67" r="6" fill="#191919" stroke={AMBER} strokeWidth="1.6" />
            <circle cx="175.5" cy="81.500" r="6" fill="none" stroke={AMBER} strokeWidth="1.6" />
            <circle cx="215.5" cy="93.5" r="6.8" fill={AMBER} />
            <g textAnchor="middle" fontSize="8" fontWeight="600">
              <text x="147.5" y="70" fill={AMBER}>
                2
              </text>
              <text x="175.5" y="84.500" fill={AMBER}>
                1
              </text>
              <text x="215.5" y="96.5" fill="#333">
                3
              </text>
            </g>
            <text x="112" y="132" textAnchor="middle" fill="#a0a0a0">
              100
            </text>
            <text x="217" y="132" fill="#a0a0a0">
              1k
            </text>
          </svg>
          <div className="flex gap-0.5 overflow-hidden">
            {bands.map((b) => (
              <div
                key={b.n}
                className={clsx(
                  "flex h-8 w-[45px] shrink-0 flex-col gap-[3px] rounded pt-[3px] pl-[5px]",
                  b.selected ? "bg-[#a9a9a9]" : "bg-[#8e8e8e]",
                )}
              >
                <button
                  aria-label={`Band ${b.n} filter type`}
                  className={clsx(
                    "flex h-[13px] w-9 items-center justify-between border border-[#4c4c4c] px-0.5",
                    b.on ? "bg-[#dcdcdc]" : "bg-[#8e8e8e]",
                  )}
                >
                  <svg viewBox="0 0 17 10" className="h-2.5 w-[17px]" fill="none" stroke="#111">
                    <path d={b.d} />
                  </svg>
                  <Caret />
                </button>
                <label className="flex items-center gap-1.5 pl-1.5 leading-[11px]">
                  <input
                    type="checkbox"
                    defaultChecked={b.on}
                    className="size-[11px] appearance-none border border-[#4c4c4c] bg-[#b8b8b8] checked:bg-[#55dcf5]"
                  />
                  {b.n}
                </label>
              </div>
            ))}
          </div>
        </div>
      </div>
    </article>
  );
}

function Devices() {
  return (
    <section className="mx-2 flex h-[196px] shrink-0 gap-px overflow-hidden rounded-t-md rounded-bl-md bg-[#464646] py-1 pr-[3px]">
      <svg viewBox="0 0 14 188" className="h-[188px] w-3.5 shrink-0">
        {[0, 1, 2, 3, 4, 5, 6, 7, 8, 9].map((i) => (
          <circle
            key={i}
            cx="7.5"
            cy={75.5 + i * 4}
            r="1.5"
            fill={i === 2 ? AMBER : i === 9 ? CYAN : "#161616"}
          />
        ))}
      </svg>
      <Rack />
      <div className="w-0" />
      <Drift />
      <FoldedDevice name="Reverb" />
      <FoldedDevice name="Delay" on />
      <div className="flex w-[18px] shrink-0 flex-col rounded-r bg-[#8e8e8e]">
        <div className="h-[17px] rounded-tr bg-[#a9a9a9]" />
      </div>
      <svg viewBox="0 0 10 188" className="h-[188px] w-2.5 shrink-0">
        <path d="M2 74h2.5v40H2zM5.5 74H8v40H5.5z" fill="#222" />
        <path d="M2 79h2.5v5H2zM5.5 79H8v5H5.5z" fill="#5a8030" />
        <path d="M2 84h2.5v15H2zM5.5 84H8v15H5.5z" fill="#8fec46" />
        <path d="M2 99h2.5v15H2zM5.5 99H8v15H5.5z" fill="#1eee3c" />
      </svg>
      <EqEight />
    </section>
  );
}

/* ---------- status bar ---------- */

function StatusBar() {
  return (
    <footer className="flex h-[38px] shrink-0 items-start px-2">
      <div className="pt-[9px] pr-2">
        <PlayCircle label="Help" />
      </div>
      <div className="mt-2 h-[22px] grow rounded border-[3px] border-[#4f4f4f] bg-[#8e8e8e] px-[7px] leading-4">
        Track Volume: 1.0 dB
      </div>
      <div className="mt-2 ml-2 w-[206px] shrink-0 rounded border-[3px] border-[#4f4f4f] bg-[#a4b8c2]">
        <svg viewBox="0 0 200 16" className="h-4 w-[200px]" stroke="#333b40">
          <path d="M0 4.5h200M0 8.5h200M0 11.5h200" />
          <path d="M18.5 0v16" strokeDasharray="3 1" />
        </svg>
      </div>
      <div className="mr-2 ml-2 flex h-[30px] w-[245px] shrink-0 items-center justify-between rounded-b-md bg-[#464646] pt-2 pr-0.5 pl-1">
        <span className="whitespace-nowrap text-[#111]">Bronto Pad</span>
        <svg viewBox="0 0 181 21" className="mb-0.5 h-[21px] w-[181px]">
          <rect x="1" y="2" width="179" height="16" fill="#808080" />
          <path d="M1 2h94v2H1zM96 2h42v2H96z" fill="#a8b4ba" />
          <path d="M20 4h22v13H20zM52 9h26v4H52zM101 5h31v11h-31zM150 5h20v12h-20z" fill="#1b1b1b" />
          <path d="M3 6h3v3H3zM8 6h3v3H8zM13 6h3v3h-3zM3 12h3v3H3zM8 12h3v3H8zM13 12h3v3h-3zM46 6h3v3h-3zM46 12h3v3h-3zM80 6h3v3h-3zM85 6h4v2h-4zM80 12h3v3h-3zM85 12h4v2h-4zM60 5h3v3h-3zM67 5h3v3h-3zM74 5h3v3h-3zM60 14h3v2h-3zM67 14h3v2h-3z" fill="#c4c4c4" />
          <path d="M37 5h2v2h-2zM33 11h2v2h-2zM25 6h2v2h-2zM117 12l8-2 4-3v1.500l-4 3-8 2zM134 6h2v2h-2zM143 6h3v2h-3zM143 14h4v2h-4z" fill="#d89c30" />
          <path d="M54 10h22v1H54zM25 11h2v2h-2zM152 7h8v1.500h-8zM152 10h14v1.500h-14zM152 13h5v1.500h-5z" fill="#4fb5cc" />
          <path d="M138 2h1.500v16H138zM93 2h1.500v16H93z" fill="#333" />
          <rect x="1" y="1" width="113" height="19" fill="none" stroke="#000" strokeWidth="2" />
        </svg>
      </div>
      <button aria-label="Show clip view" className="mt-2 flex size-[19px] shrink-0 items-center justify-center rounded-full bg-[#4f4f4f]">
        <svg viewBox="0 0 11 11" className="size-[11px]" fill="#999">
          <path d="M5.5 0 11 11H0z" />
        </svg>
      </button>
    </footer>
  );
}

export default function App() {
  return (
    <main className="flex min-h-screen flex-col overflow-hidden bg-[#6f6f6f] font-[Inter,'Liberation_Sans',sans-serif] text-[10px] font-medium text-[#111]">
      <Transport />
      <div className="mb-2 flex grow gap-2 px-2">
        <Browser />
        <Session />
      </div>
      <Devices />
      <StatusBar />
    </main>
  );
}
